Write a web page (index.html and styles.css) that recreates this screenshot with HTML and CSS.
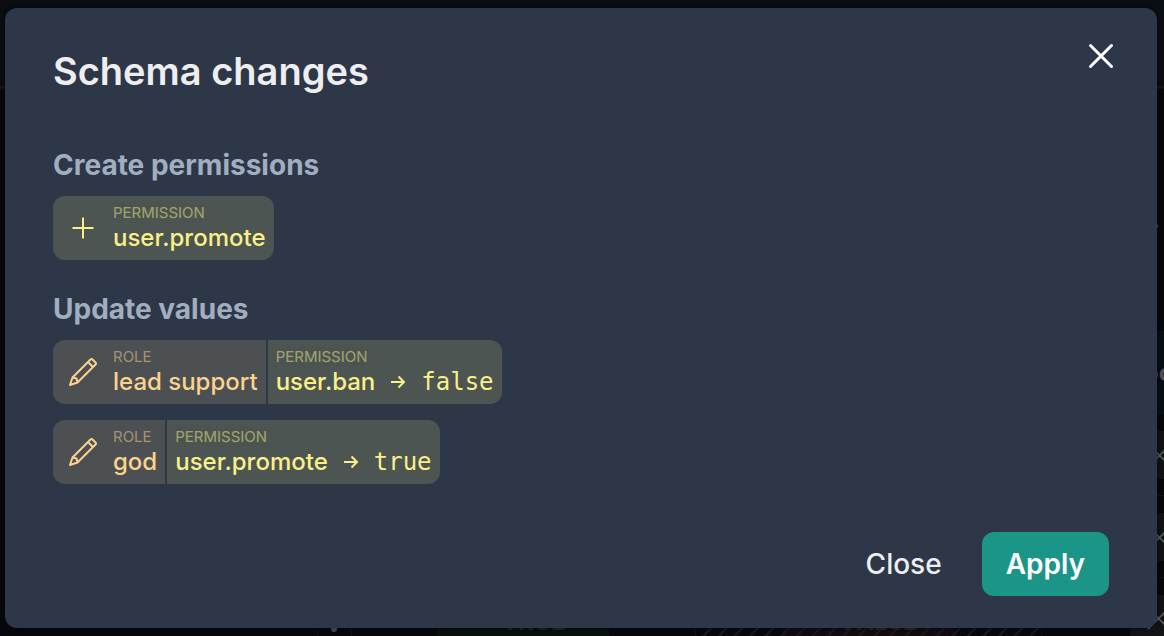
FILE: index.html
```html
<!DOCTYPE html>
<html lang="en">
<head>
<meta charset="utf-8">
<meta name="viewport" content="width=device-width, initial-scale=1">
<title>Schema changes</title>
<link rel="stylesheet" href="styles.css">
</head>
<body>
<svg class="backdrop" viewBox="0 0 1164 636" preserveAspectRatio="none" aria-hidden="true">
  <defs>
    <pattern id="hatch" width="11" height="11" patternUnits="userSpaceOnUse" patternTransform="rotate(45)">
      <rect width="2" height="11" fill="#1b1b20"/>
    </pattern>
  </defs>
  <rect width="1164" height="88" fill="#0b0e13"/>
  <rect y="88" width="1164" height="548" fill="#06080c"/>
  <path d="M0 87.500H1164" stroke="#1a1a1d" stroke-width="2"/>
  <rect x="1150" y="331" width="14" height="83" fill="#090e17"/>
  <path d="M1150 331.500h14M1150 413.500h14M1150 495.500h14M1150 577.500h14" stroke="#0e121a"/>
  <path d="M1130 431h34v48h-34zM1130 513h34v48h-34zM1130 595h34v41h-34z" fill="#131418"/>
  <path d="M1155 451l10 10M1155 460l10-10M1155 533l10 10M1155 542l10-10M1155 615l10 10M1148 629l17-17" stroke="#66696c" stroke-width="1.500" fill="none"/>
  <circle cx="1157" cy="226" r="1.500" fill="#555"/>
  <text x="1144" y="381" class="backdrop-heading">oo</text>
  <rect x="437" y="600" width="172" height="36" fill="#09100f"/>
  <text x="502" y="630" class="backdrop-true">TRUE</text>
  <rect x="783" y="600" width="172" height="36" fill="#120c11"/>
  <rect x="701" y="600" width="342" height="36" fill="url(#hatch)"/>
  <text x="844" y="630" class="backdrop-false">FALSE</text>
  <path d="M317.500 600v36M351.500 600v36M695.500 600v36M1041.500 600v36" stroke="#0e1015"/>
  <circle cx="334" cy="629" r="3" fill="#555"/>
</svg>
<main class="overlay">
  <section class="dialog" role="dialog" aria-modal="true" aria-labelledby="dialog-title">
    <header class="dialog-header">
      <h1 class="dialog-title" id="dialog-title">Schema changes</h1>
      <button class="icon-button" type="button" aria-label="Close dialog">
        <svg class="close-icon" viewBox="0 0 28 28"><path d="M3.500 3.500l21 21M24.500 3.500l-21 21"/></svg>
      </button>
    </header>
    <div class="dialog-body">
      <section class="group">
        <h2 class="group-title">Create permissions</h2>
        <div class="change">
          <div class="tag permission">
            <svg class="tag-icon" viewBox="0 0 28 28" aria-hidden="true"><path d="M14 3.500v21M3.500 14h21"/></svg>
            <div class="tag-text"><span class="tag-label">Permission</span><span class="tag-value">user.promote</span></div>
          </div>
        </div>
      </section>
      <section class="group">
        <h2 class="group-title">Update values</h2>
        <div class="change">
          <div class="tag role">
            <svg class="tag-icon" viewBox="0 0 28 28" aria-hidden="true"><path d="M1 27L3.500 19.500L21.500 1.500Q22.500 .5 23.500 1.500L26.500 4.500Q27.500 5.500 26.500 6.500L8.500 24.500ZM3.500 19.500L7.500 20.500L8.500 24.500M19 4l5 5"/></svg>
            <div class="tag-text"><span class="tag-label">Role</span><span class="tag-value">lead support</span></div>
          </div>
          <div class="tag permission">
            <div class="tag-text"><span class="tag-label">Permission</span><span class="tag-value">user.ban
              <svg class="arrow" viewBox="0 0 16 16" aria-label="to"><path d="M1 8h13M8.500 2.500l5.500 5.500-5.500 5.500"/></svg>
              <code class="literal">false</code></span></div>
          </div>
        </div>
        <div class="change">
          <div class="tag role">
            <svg class="tag-icon" viewBox="0 0 28 28" aria-hidden="true"><path d="M1 27L3.500 19.500L21.500 1.500Q22.500 .5 23.500 1.500L26.500 4.500Q27.500 5.500 26.500 6.500L8.500 24.500ZM3.500 19.500L7.500 20.500L8.500 24.500M19 4l5 5"/></svg>
            <div class="tag-text"><span class="tag-label">Role</span><span class="tag-value">god</span></div>
          </div>
          <div class="tag permission">
            <div class="tag-text"><span class="tag-label">Permission</span><span class="tag-value">user.promote
              <svg class="arrow" viewBox="0 0 16 16" aria-label="to"><path d="M1 8h13M8.500 2.500l5.500 5.500-5.500 5.500"/></svg>
              <code class="literal">true</code></span></div>
          </div>
        </div>
      </section>
    </div>
    <footer class="dialog-footer">
      <button class="button" type="button">Close</button>
      <button class="button primary" type="button">Apply</button>
    </footer>
  </section>
</main>
</body>
</html>
```
FILE: styles.css
```css
* { box-sizing: border-box; }
body {
  margin: 0;
  background: #06080c;
  color: #eeeef1;
  font-family: Inter, "Liberation Sans", sans-serif;
}
.backdrop {
  position: absolute;
  inset: 0;
  width: 100%;
  height: 100%;
}
.backdrop-heading { font-size: 24px; font-weight: 700; fill: #55575a; }
.backdrop-true { font-size: 24px; font-weight: 700; fill: #1c2d22; }
.backdrop-false { font-size: 24px; font-weight: 700; fill: #3a2020; }
.overlay {
  position: relative;
  padding: 8px 7px 8px 5px;
}
.dialog {
  padding: 32px 48px;
  background: #2d3748;
  border-radius: 12px;
  box-shadow: 0 0 8px rgba(0, 0, 0, 0.6);
}
.dialog-header {
  display: flex;
  justify-content: space-between;
  align-items: flex-start;
}
.dialog-title {
  margin: 0;
  font-size: 38px;
  line-height: 62px;
  font-weight: 600;
}
.icon-button {
  display: grid;
  place-items: center;
  width: 32px;
  height: 32px;
  margin-right: -8px;
  padding: 0;
  border: 0;
  background: none;
  color: #fff;
}
.close-icon {
  width: 28px;
  height: 28px;
  fill: none;
  stroke: currentColor;
  stroke-width: 3;
  stroke-linecap: round;
}
.dialog-body {
  display: grid;
  gap: 32px;
  padding: 46px 0 48px;
}
.group {
  display: grid;
  gap: 16px;
}
.group-title {
  margin: 0 0 -2px;
  font-size: 28px;
  line-height: 34px;
  font-weight: 700;
  color: #a0aec0;
}
.change {
  display: flex;
  gap: 2px;
  width: fit-content;
  border-radius: 12px;
  overflow: hidden;
}
.tag {
  display: flex;
  align-items: center;
  gap: 16px;
  height: 64px;
  padding: 0 8px;
}
.permission { background: rgba(250, 240, 137, 0.16); color: #faf089; }
.role { background: rgba(251, 211, 141, 0.16); color: #fbd38d; }
.tag-icon {
  width: 28px;
  height: 28px;
  margin-left: 8px;
  fill: none;
  stroke: currentColor;
  stroke-width: 2;
  stroke-linejoin: round;
}
.tag-text {
  display: grid;
  padding-top: 2px;
}
.tag-label {
  font-size: 15px;
  line-height: 18px;
  font-weight: 400;
  text-transform: uppercase;
  opacity: 0.5;
}
.tag-value {
  display: flex;
  align-items: center;
  gap: 15px;
  font-size: 24px;
  line-height: 32px;
  font-weight: 500;
}
.arrow {
  width: 16px;
  height: 16px;
  fill: none;
  stroke: currentColor;
  stroke-width: 2;
}
.literal {
  font-family: "DejaVu Sans Mono", monospace;
  font-size: 24px;
  font-weight: 400;
}
.dialog-footer {
  display: flex;
  justify-content: flex-end;
  gap: 16px;
}
.button {
  height: 64px;
  padding: 0 24px;
  border: 0;
  border-radius: 12px;
  background: none;
  color: #eeeef1;
  font: 500 28px/32px Inter, "Liberation Sans", sans-serif;
}
.primary { background: #1a9587; color: #fff; font-weight: 600; }
```
